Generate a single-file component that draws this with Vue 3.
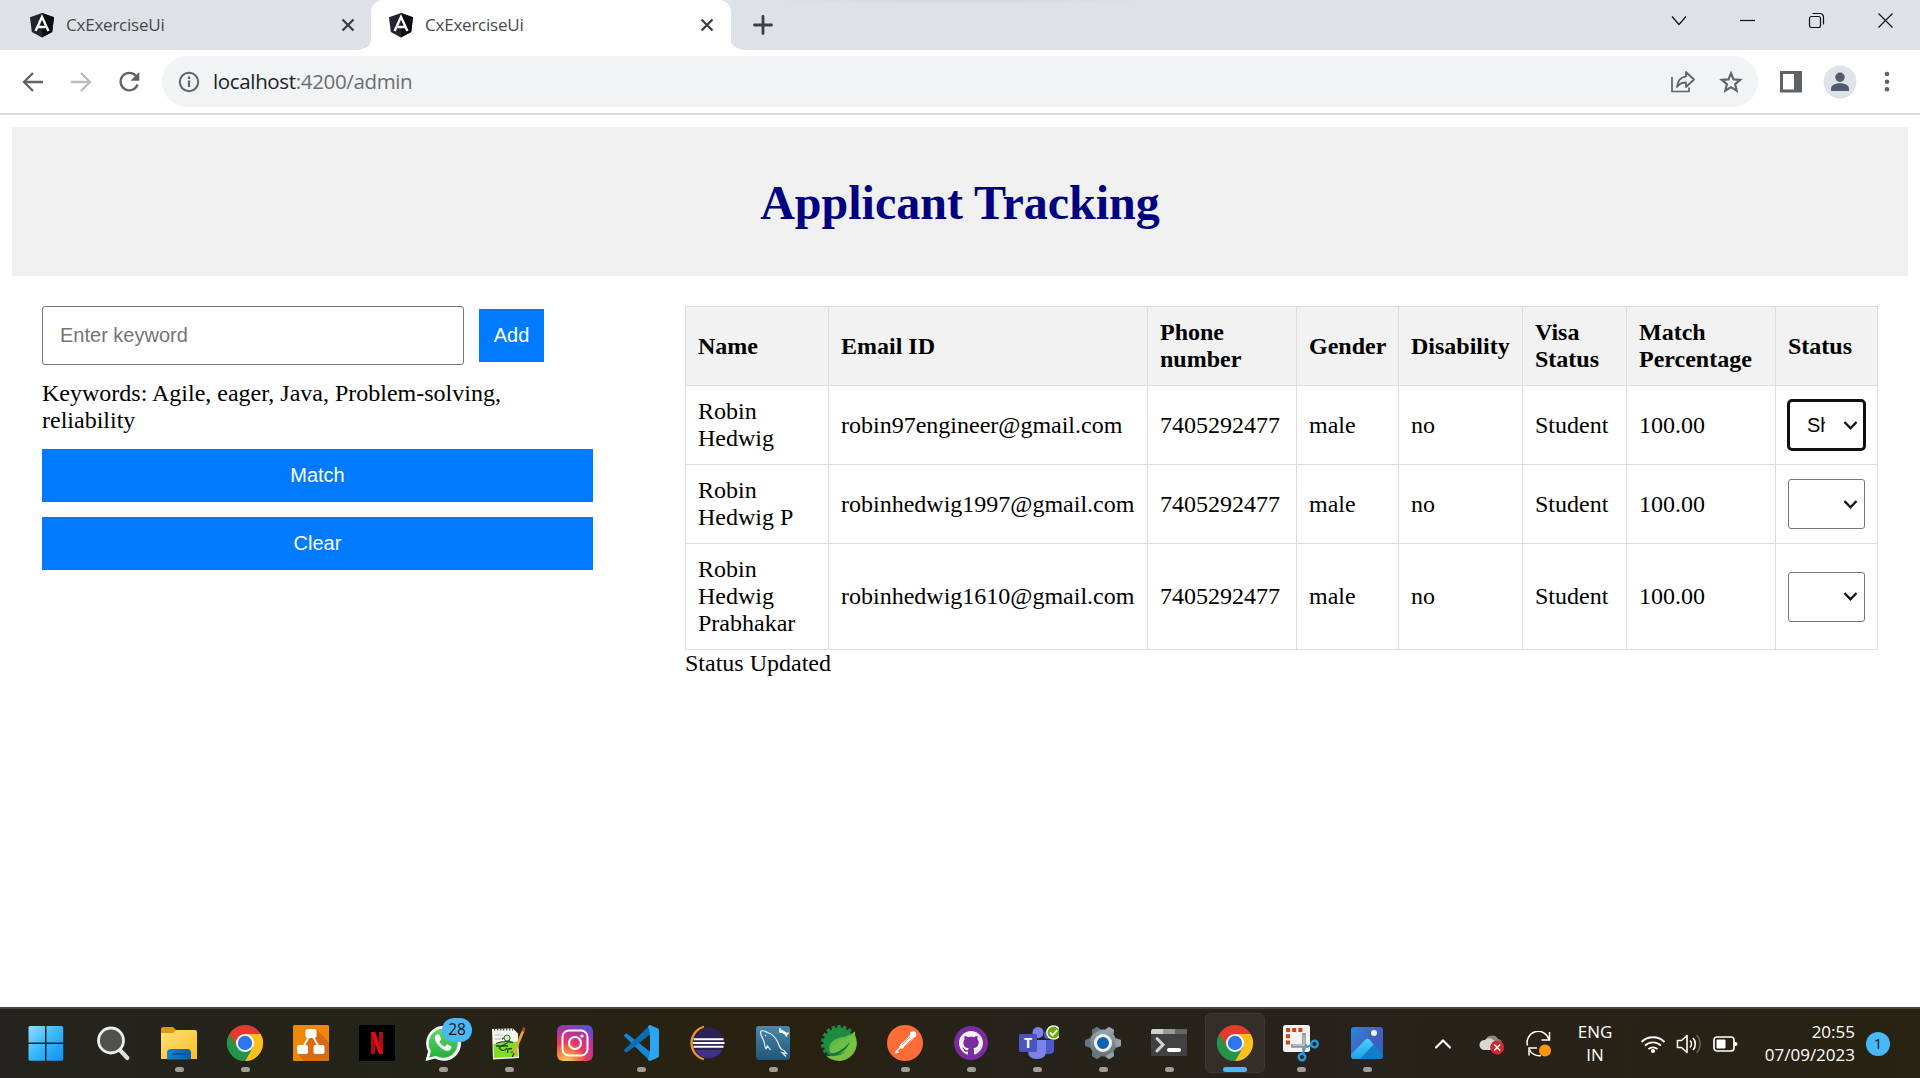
<script setup>
import { ref } from 'vue'

const keyword = ref('')
const tabs = [
  { title: 'CxExerciseUi', active: false },
  { title: 'CxExerciseUi', active: true }
]
const columns = [
  { label: 'Name', width: 143 },
  { label: 'Email ID', width: 319 },
  { label: 'Phone number', width: 149 },
  { label: 'Gender', width: 102 },
  { label: 'Disability', width: 124 },
  { label: 'Visa Status', width: 104 },
  { label: 'Match Percentage', width: 149 },
  { label: 'Status', width: 102 }
]
const applicants = [
  { name: 'Robin Hedwig', email: 'robin97engineer@gmail.com', status: 'Shortlisted' },
  { name: 'Robin Hedwig P', email: 'robinhedwig1997@gmail.com', status: '' },
  { name: 'Robin Hedwig Prabhakar', email: 'robinhedwig1610@gmail.com', status: '' }
]
const apps = [
  { id: 'start' },
  { id: 'search' },
  { id: 'explorer', running: true },
  { id: 'chrome', running: true },
  { id: 'drawio' },
  { id: 'netflix' },
  { id: 'whatsapp', running: true, badge: '28' },
  { id: 'notepad', running: true },
  { id: 'instagram' },
  { id: 'vscode', running: true },
  { id: 'eclipse' },
  { id: 'mysql', running: true },
  { id: 'spring' },
  { id: 'postman', running: true },
  { id: 'github', running: true },
  { id: 'teams', running: true },
  { id: 'settings', running: true },
  { id: 'terminal', running: true },
  { id: 'chrome', running: true, active: true },
  { id: 'snip', running: true },
  { id: 'photos', running: true }
]
const teeth = [-120, -100, -80, -60, -40, -20, 0, 20, 40]
</script>

<template>
  <div class="screen">
    <div class="tabstrip">
      <div v-for="(tab, i) in tabs" :key="i" class="tab" :class="{ active: tab.active }">
        <svg class="favicon" width="26" height="26" viewBox="0 0 26 26">
          <path d="M13 1L25 5.2 23.2 20 13 25.4 2.8 20 1 5.2z" fill="#22242e" />
          <path d="M13 1L25 5.2 23.2 20 13 25.4z" fill="#0c0d14" />
          <path d="M6.6 19L13 4.8 19.4 19M9.6 15h6.8" fill="none" stroke="#fff" stroke-width="2.4" />
        </svg>
        <span class="tab-title">{{ tab.title }}</span>
        <svg class="tab-close" width="14" height="14" viewBox="0 0 14 14">
          <path d="M1.5 1.5l11 11M12.5 1.5l-11 11" stroke="#3c4043" stroke-width="2.3" />
        </svg>
      </div>
      <svg class="new-tab" width="20" height="20" viewBox="0 0 20 20">
        <path d="M10 1.500v17M1.500 10h17" stroke="#3c4043" stroke-width="2.800" stroke-linecap="round" />
      </svg>
      <div class="window-controls">
        <svg width="17" height="17" viewBox="0 0 17 17"><path d="M2 4.500l7 8 7-8" /></svg>
        <svg width="17" height="17" viewBox="0 0 17 17"><path d="M1 8.5h15" /></svg>
        <svg width="17" height="17" viewBox="0 0 17 17">
          <rect x="1.5" y="4.5" width="11" height="11" rx="2" />
          <path d="M4.5 1.500h7.500a3.500 3.500 0 0 1 3.500 3.500v7.500" />
        </svg>
        <svg width="17" height="17" viewBox="0 0 17 17"><path d="M1.500 1.500l14 14M15.500 1.500l-14 14" /></svg>
      </div>
    </div>

    <div class="toolbar">
      <div class="nav-buttons">
        <svg width="24" height="24" viewBox="0 0 24 24"><path d="M22 12H4M12 3l-9 9 9 9" stroke="#5f6368" /></svg>
        <svg width="24" height="24" viewBox="0 0 24 24"><path d="M2 12h18M12 3l9 9-9 9" stroke="#babcbe" /></svg>
        <svg width="24" height="24" viewBox="0 0 24 24">
          <path d="M20.500 14.500A8.700 8.700 0 1 1 18.800 5.800" stroke="#5f6368" />
          <path class="arrowhead" d="M22.300 2v8.700h-8.700z" />
        </svg>
      </div>
      <div class="omnibox">
        <svg class="info" width="24" height="24" viewBox="0 0 24 24">
          <circle cx="12" cy="12" r="9.200" fill="none" stroke="#5f6368" stroke-width="2" />
          <path d="M12 10.500v6.500M12 6.600v2.400" stroke="#5f6368" stroke-width="2.200" />
        </svg>
        <span class="url"><span class="host">localhost</span>:4200/admin</span>
        <svg class="share" width="26" height="24" viewBox="0 0 26 24">
          <path d="M2 7v14.500h17v-4" fill="none" stroke="#5f6368" stroke-width="1.700" />
          <path d="M16 2l8 7.500-8 7.500V12.500c-4 0-7 1.500-9 4.500.500-6 4-10 9-10.700z" fill="none" stroke="#5f6368" stroke-width="1.800" stroke-linejoin="round" />
        </svg>
        <svg class="star" width="24" height="24" viewBox="0 0 24 24">
          <path d="M12 3.200l2.500 6.200 6.700.500-5.100 4.300 1.600 6.500L12 17.200l-5.700 3.500 1.600-6.500-5.100-4.300 6.700-.500z" fill="none" stroke="#5f6368" stroke-width="2.100" />
        </svg>
      </div>
      <svg class="panel" width="22" height="22" viewBox="0 0 22 22">
        <path d="M0 0h22v21.500H0zM3 3v15.500h11V3z" fill="#5f6368" fill-rule="evenodd" />
      </svg>
      <svg class="avatar" width="34" height="34" viewBox="0 0 34 34">
        <circle cx="17" cy="17" r="16.500" fill="#dfe2e9" />
        <circle cx="17" cy="12.200" r="4.700" fill="#505b6e" />
        <path d="M8 26v-2.500c0-3.500 5-5.300 9-5.300s9 1.800 9 5.300V26z" fill="#505b6e" />
      </svg>
      <svg class="menu" width="6" height="22" viewBox="0 0 6 22" fill="#5f6368">
        <circle cx="3" cy="3" r="2.300" /><circle cx="3" cy="10.700" r="2.300" /><circle cx="3" cy="18.300" r="2.300" />
      </svg>
    </div>

    <main class="page">
      <header class="banner"><h1>Applicant Tracking</h1></header>
      <div class="content">
        <section class="filters">
          <div class="keyword-row">
            <input v-model="keyword" type="text" placeholder="Enter keyword">
            <button class="add">Add</button>
          </div>
          <p class="keywords">Keywords: Agile, eager, Java, Problem-solving, reliability</p>
          <button class="wide">Match</button>
          <button class="wide">Clear</button>
        </section>
        <section class="results">
          <table>
            <colgroup><col v-for="c in columns" :key="c.label" :style="{ width: c.width + 'px' }"></colgroup>
            <thead>
              <tr><th v-for="c in columns" :key="c.label">{{ c.label }}</th></tr>
            </thead>
            <tbody>
              <tr v-for="a in applicants" :key="a.email">
                <td>{{ a.name }}</td>
                <td>{{ a.email }}</td>
                <td>7405292477</td>
                <td>male</td>
                <td>no</td>
                <td>Student</td>
                <td>100.00</td>
                <td>
                  <div class="select" :class="{ focused: a.status }">
                    <span class="select-value">{{ a.status.slice(0, 2) }}</span>
                    <svg width="15" height="11" viewBox="0 0 15 11"><path d="M1.500 2l6 6.300 6-6.300" fill="none" stroke="#111" stroke-width="2.300" /></svg>
                  </div>
                </td>
              </tr>
            </tbody>
          </table>
          <p class="message">Status Updated</p>
        </section>
      </div>
    </main>

    <footer class="taskbar">
      <svg class="defs" width="0" height="0">
        <defs>
          <linearGradient id="win" x1="0" y1="0" x2="1" y2="1"><stop offset="0" stop-color="#8ae0ff" /><stop offset=".5" stop-color="#35b7fa" /><stop offset="1" stop-color="#0c8ff5" /></linearGradient>
          <linearGradient id="folder" x1="0" y1="0" x2="1" y2="1"><stop offset="0" stop-color="#ffe07a" /><stop offset="1" stop-color="#fbbf24" /></linearGradient>
          <linearGradient id="pocket" x1="0" y1="0" x2="1" y2="0"><stop offset="0" stop-color="#1583d6" /><stop offset="1" stop-color="#0a5ba5" /></linearGradient>
          <linearGradient id="whats" x1="0" y1="0" x2="0" y2="1"><stop offset="0" stop-color="#62d66e" /><stop offset="1" stop-color="#24b13c" /></linearGradient>
          <radialGradient id="insta" cx=".25" cy="1.050" r="1.150"><stop offset="0" stop-color="#ffd867" /><stop offset=".25" stop-color="#fb8b3c" /><stop offset=".5" stop-color="#e93a5e" /><stop offset=".75" stop-color="#c02f9c" /><stop offset="1" stop-color="#5a4fd0" /></radialGradient>
          <linearGradient id="mysql" x1="0" y1="0" x2="0" y2="1"><stop offset="0" stop-color="#4d87ac" /><stop offset="1" stop-color="#1f5579" /></linearGradient>
          <linearGradient id="leaf" x1="0" y1="0" x2="1" y2="1"><stop offset="0" stop-color="#4fae45" /><stop offset="1" stop-color="#86cb45" /></linearGradient>
          <linearGradient id="gear" x1="0" y1="0" x2="0" y2="1"><stop offset="0" stop-color="#9aa4ab" /><stop offset="1" stop-color="#64717a" /></linearGradient>
          <linearGradient id="photo" x1="0" y1="0" x2="1" y2="1"><stop offset="0" stop-color="#1f8be0" /><stop offset=".55" stop-color="#4a5cb9" /><stop offset="1" stop-color="#0e6fd0" /></linearGradient>
          <linearGradient id="hill" x1="0" y1="0" x2="0" y2="1"><stop offset="0" stop-color="#4cd2fb" /><stop offset="1" stop-color="#1f9eea" /></linearGradient>
        </defs>
      </svg>
      <div class="apps">
        <div v-for="(app, i) in apps" :key="i" class="app" :class="[app.id, { active: app.active, running: app.running }]">
          <svg width="44" height="44" viewBox="-4 -4 44 44">
            <g v-if="app.id === 'start'">
              <path d="M.500 2.500a1.500 1.500 0 0 1 1.500-1.500h15v16.500H.500zM18.500 1h15.200a1.500 1.500 0 0 1 1.500 1.500v15H18.500zM.500 19h16.500v16.700H2a1.500 1.500 0 0 1-1.500-1.500zM18.500 19h16.700v15.200a1.500 1.500 0 0 1-1.500 1.500H18.500z" fill="url(#win)" />
            </g>
            <g v-else-if="app.id === 'search'">
              <path d="M24 24l8.300 9" stroke="#dedede" stroke-width="4.200" stroke-linecap="round" />
              <circle cx="16" cy="15.500" r="12.500" fill="#50504d" stroke="#ececec" stroke-width="2.800" />
            </g>
            <g v-else-if="app.id === 'explorer'">
              <path d="M0 8V4q0-2 2-2h10l4 4v5H0z" fill="#d99b0b" />
              <path d="M0 8h12l3-3h19q2 0 2 2v27H0z" fill="url(#folder)" />
              <path d="M6 34.500V28q0-4 4-4h16q4 0 4 4v6.500z" fill="url(#pocket)" />
              <path d="M11 29h14" stroke="#0a4d8c" stroke-width="1.600" />
            </g>
            <g v-else-if="app.id === 'chrome'">
              <circle cx="18" cy="18" r="18" fill="#e33b2e" />
              <path d="M18 9h15.590A18 18 0 0 1 18 36l7.800-13.500z" fill="#fcc21b" />
              <path d="M2.410 9L10.200 22.500l8 4.500 7.600-4.500L18 36A18 18 0 0 1 2.410 9z" fill="#21954a" />
              <circle cx="18" cy="18" r="9" fill="#fff" /><circle cx="18" cy="18" r="7.200" fill="#2b78ee" />
            </g>
            <g v-else-if="app.id === 'drawio'">
              <rect width="36" height="36" rx="1.500" fill="#f08705" />
              <path d="M23 4l13 13v19H11l-6-7 9-14z" fill="#d96c13" />
              <path d="M17 10L9 24M19 10l8 14" stroke="#fff" stroke-width="1.800" />
              <rect x="12.500" y="4" width="11" height="9" rx="2" fill="#fff" /><rect x="4" y="20" width="11" height="9" rx="2" fill="#fff" /><rect x="20.500" y="20" width="11" height="9" rx="2" fill="#fff" />
            </g>
            <g v-else-if="app.id === 'netflix'">
              <rect width="36" height="36" fill="#000" />
              <rect x="12" y="7" width="4" height="22" fill="#a90d16" /><rect x="20" y="7" width="4" height="22" fill="#a90d16" />
              <rect x="7.800" y="7" width="4.200" height="22" fill="#e50914" transform="translate(1.640 0) skewX(20)" />
            </g>
            <g v-else-if="app.id === 'whatsapp'">
              <path d="M.500 36l2.600-9.500A17.500 17.500 0 1 1 10 33.600z" fill="#fff" />
              <path d="M4.200 32.500l1.700-6.500A14.500 14.500 0 1 1 11 30.900z" fill="url(#whats)" />
              <path d="M12 9.500c-3 1.500-3 5 0 9s7 7 10 7.300 4.500-2 4.500-4.300l-4.500-2.300-2.200 2.500c-2.500-1-4.500-3-5.500-5.400l2-2-2-4.800z" fill="#fff" />
            </g>
            <g v-else-if="app.id === 'notepad'">
              <path d="M1 4l21-.500 5 5L28 33 2 34.500z" fill="#f6f6f2" />
              <path d="M2.500 19L26 16.500 27 31.500 3 33z" fill="#7fdc2a" />
              <path d="M3 4.500h19" stroke="#444" stroke-width="2.200" stroke-dasharray="1.300 1.700" />
              <path d="M4 10h8M4 14h6" stroke="#a8b7cc" />
              <path d="M5 18.500q8-3 17-1M5 21h12M11 14c5-4 10 1 5 4s-9 4-7 6 5 2 7-1M16.500 28l.5-4 4-.500M20 27.500l5-1.500" fill="none" stroke="#1c4a1d" stroke-width="1.300" />
              <circle cx="16" cy="13" r="3" fill="#d7f0bf" stroke="#287b23" />
              <path d="M22.500 29L32.500 5" stroke="#e9a829" stroke-width="2.800" /><path d="M31.700 6.500l1.800-4" stroke="#bb3b36" stroke-width="2.600" /><path d="M22.800 28l-1.300 4" stroke="#333" stroke-width="1.200" />
            </g>
            <g v-else-if="app.id === 'instagram'">
              <rect width="36" height="36" rx="6" fill="url(#insta)" />
              <rect x="5.500" y="5.500" width="25" height="25" rx="6.500" fill="none" stroke="#fff" stroke-width="2" />
              <circle cx="18" cy="18" r="6" fill="none" stroke="#fff" stroke-width="2.200" /><circle cx="25" cy="11" r="1.600" fill="#fff" />
            </g>
            <g v-else-if="app.id === 'vscode'">
              <path d="M1 10.500l2.500-1.700L27 27v8.500z" fill="#1287d2" stroke="#1287d2" stroke-linejoin="round" />
              <path d="M1 25.500l2.500 1.700L27 9V.500z" fill="#0a6db5" stroke="#0a6db5" stroke-linejoin="round" />
              <path d="M27 0l8 3.500q1 .500 1 2v25q0 1.500-1 2L27 36l-2-1 2-7V8.500L25 1z" fill="#2ba4f2" />
              <path d="M26.500 10v16L16.500 18z" fill="#262218" />
            </g>
            <g v-else-if="app.id === 'eclipse'">
              <path d="M15 1.500a17 17 0 0 0 0 33A18 18 0 0 1 15 1.500z" fill="#f7941e" stroke="#f7941e" stroke-width="1.500" />
              <circle cx="19.500" cy="18" r="15.800" fill="#2d2055" /><path d="M6 25a15.500 15.500 0 0 0 27 0z" fill="#41308a" />
              <path d="M4.500 14.200h30M4 18h31.500M4.500 21.800h30" stroke="#fff" stroke-width="2" />
            </g>
            <g v-else-if="app.id === 'mysql'">
              <rect x="1" y="1" width="34" height="34" rx="3" fill="url(#mysql)" />
              <path d="M11 24c-2-4-1-6-3-10C6 11 5 7 6 6c3-1 5 1 6.500 1.500 5 1 8 5 10.500 10 1 3 2 6 4 7 2.500 1 3 2 4.500 4l-4.500-1 4 4M11 24l1.500-3 3 4" fill="none" stroke="#e4eff6" stroke-width="1.200" />
              <circle cx="10.500" cy="10.500" r=".7" fill="#fff" />
              <path d="M26 5.500l6.500 4.500" stroke="#fff" stroke-width="2.600" /><path d="M25 3v4h3M34 8l-3 .500.500 3" fill="none" stroke="#fff" stroke-width="1.500" />
            </g>
            <g v-else-if="app.id === 'spring'">
              <g fill="#1f8a42"><rect v-for="t in teeth" :key="t" x="16.300" y="0" width="3.400" height="5" :transform="`rotate(${t} 18 18)`" /></g>
              <circle cx="18" cy="18" r="15.500" fill="#1f8a42" />
              <path d="M33.500 9a18 18 0 0 1-28.500 21.500c8 1.500 15 .500 20-4 5-4.500 7-10.500 8.500-17.500z" fill="#79c143" />
              <path d="M34 6c-5 6.500-13 5-20 8.500-6 3.500-7 9-4.500 13.500 8 1.500 17 0 21.500-7 3-5 3.500-10 3-15z" fill="url(#leaf)" />
              <path d="M4.500 29.500c3-.500 5.500-.500 9-1.500 6-2 11-6 15.500-11-3 7-8 11-15 13-4 .9-7 .5-9.500-.500z" fill="#17743b" />
            </g>
            <g v-else-if="app.id === 'postman'">
              <circle cx="18" cy="18" r="18" fill="#ff6c37" />
              <path d="M12 22L23 10l3.500 3.500L15 24z" fill="#fff" /><circle cx="26.200" cy="9.500" r="3.200" fill="#fff" />
              <path d="M14 22l-5.500 5M8 28l4-1.200M13 20l10-6" stroke="#fff" stroke-width="1.300" /><path d="M15 20l8-8M17 22l8-8" stroke="#ff6c37" stroke-width=".7" />
            </g>
            <g v-else-if="app.id === 'github'">
              <circle cx="18" cy="18" r="17" fill="#7b2da0" />
              <path transform="translate(6 6) scale(1.500)" fill="#f7f1fa" d="M8 0C3.580 0 0 3.580 0 8c0 3.540 2.290 6.530 5.470 7.590.4.070.55-.17.55-.38 0-.19-.01-.82-.01-1.490-2.010.37-2.530-.49-2.690-.94-.09-.23-.48-.94-.82-1.130-.28-.15-.68-.52-.01-.53.63-.01 1.080.58 1.230.82.72 1.210 1.870.87 2.330.66.07-.52.28-.87.51-1.070-1.780-.2-3.640-.89-3.640-3.950 0-.87.31-1.590.82-2.150-.08-.2-.36-1.020.08-2.120 0 0 .67-.21 2.200.82.64-.18 1.320-.27 2-.27s1.360.09 2 .27c1.530-1.040 2.200-.82 2.200-.82.44 1.100.16 1.920.08 2.120.51.56.82 1.270.82 2.150 0 3.070-1.870 3.750-3.650 3.950.29.25.54.73.54 1.480 0 1.070-.01 1.930-.01 2.200 0 .21.15.46.55.38A8.010 8.010 0 0 0 16 8c0-4.420-3.580-8-8-8z" />
            </g>
            <g v-else-if="app.id === 'teams'">
              <circle cx="29" cy="10" r="4" fill="#5059c9" /><path d="M24 15h11v10q0 4-6 4h-5z" fill="#5059c9" />
              <circle cx="19" cy="7.500" r="5.500" fill="#7b83eb" /><path d="M9 15h18v11q0 8-9 8t-9-8z" fill="#7b83eb" />
              <rect x="0" y="9" width="18" height="18" rx="1.500" fill="#4b53bc" />
              <text x="9" y="23" text-anchor="middle" font-family="'Open Sans', sans-serif" font-size="14" font-weight="700" fill="#fff">T</text>
              <circle cx="34.500" cy="7.500" r="7.300" fill="#fff" /><circle cx="34.500" cy="7.500" r="6" fill="#6fac0b" /><path d="M31 7.500l2.700 2.700 4.500-5" fill="none" stroke="#fff" stroke-width="1.800" />
            </g>
            <g v-else-if="app.id === 'settings'">
              <g fill="url(#gear)"><circle cx="18" cy="18" r="13.500" /><path d="M13 5.500L15 1h6l2 4.500zM13 30.500L15 35h6l2-4.500z" transform="rotate(30 18 18)" /><path d="M13 5.500L15 0h6l2 5.500zM13 30.500L15 36h6l2-5.500z" transform="rotate(90 18 18)" /><path d="M13 5.500L15 1h6l2 4.500zM13 30.500L15 35h6l2-4.500z" transform="rotate(150 18 18)" /></g>
              <circle cx="18" cy="18" r="7.500" fill="#0e61b4" stroke="#f3f5f7" stroke-width="3" />
            </g>
            <g v-else-if="app.id === 'terminal'">
              <rect y="4" width="36" height="27" rx="1.500" fill="#414141" /><path d="M1.500 4H12v5H0V5.500z" fill="#d0d0d0" /><path d="M12 4h12v5H12z" fill="#999" /><path d="M24 4h12v5H24z" fill="#666" />
              <path d="M6 13.500l6 6.200-6 6.200" fill="none" stroke="#d1d1d1" stroke-width="3" stroke-linecap="round" /><path d="M18 25h10" stroke="#fff" stroke-width="4" stroke-linecap="round" />
            </g>
            <g v-else-if="app.id === 'snip'">
              <rect x="0" y="0" width="27" height="27" rx="2.500" fill="#f3f3f3" />
              <path d="M3 5h16.500M5 9.200v10.500" stroke="#d34310" stroke-width="4" stroke-dasharray="4 2.200" />
              <path d="M8 21h16M21 8v17" stroke="#8e949b" stroke-width="3.600" /><path d="M10 20h11V10" fill="none" stroke="#c2c6ca" stroke-width="1.400" />
              <circle cx="31.500" cy="19" r="3.300" fill="none" stroke="#2398e2" stroke-width="2.400" /><circle cx="19" cy="32" r="3.300" fill="none" stroke="#2398e2" stroke-width="2.400" /><path d="M28.500 20.500L23 22M21 24l-1 5" fill="none" stroke="#2398e2" stroke-width="2.200" />
            </g>
            <g v-else>
              <rect x="2" y="2" width="32" height="32" rx="3" fill="url(#photo)" />
              <path d="M2.500 31L16 15q2.500-3 5 0L33.500 30v1q0 3-3 3H5q-2.500 0-2.500-3z" fill="#137dc9" />
              <path d="M2 29.500L16 15q2.500-3 5 0l3.500 4.500L11 34H5q-3 0-3-3z" fill="url(#hill)" /><circle cx="25" cy="8" r="3" fill="#effaff" />
            </g>
          </svg>
          <span v-if="app.badge" class="badge">{{ app.badge }}</span>
        </div>
      </div>
      <div class="tray">
        <svg class="up" width="18" height="12" viewBox="0 0 18 12"><path d="M2 9.500l7-7 7 7" fill="none" stroke="#fff" stroke-width="2.200" stroke-linecap="round" /></svg>
        <svg class="cloud" width="26" height="22" viewBox="0 0 26 22">
          <path d="M6 9a7 7 0 0 1 13-3 6 6 0 0 1 3 10H7z" fill="#8b8b88" /><path d="M5 17a5 5 0 0 1 1-10 6 6 0 0 1 10 3l-3 7z" fill="#d6d6d4" />
          <circle cx="18.200" cy="14.500" r="7" fill="#d1272f" /><path d="M15.200 11.500l6 6M21.200 11.500l-6 6" stroke="#fff" stroke-width="1.500" />
        </svg>
        <svg class="sync" width="26" height="26" viewBox="0 0 26 26">
          <path d="M1.500 14.500A10.500 10.500 0 0 1 23 8.500M23.500 1v8h-8M3 24.500v-7.500h8M3 18a11 11 0 0 0 12 6.500" fill="none" stroke="#fff" stroke-width="1.500" /><circle cx="19" cy="19.500" r="6" fill="#ff9800" />
        </svg>
        <div class="lang"><span>ENG</span><span>IN</span></div>
        <svg class="wifi" width="26" height="20" viewBox="0 0 26 20">
          <g fill="none" stroke="#fff" stroke-width="1.800"><path d="M1.500 8a16.300 16.300 0 0 1 23 0M5 11.700a11.300 11.300 0 0 1 16 0M8.400 15.200a6.500 6.500 0 0 1 9.200 0" /></g><circle cx="13" cy="17" r="2.100" fill="#fff" />
        </svg>
        <svg class="volume" width="26" height="22" viewBox="0 0 26 22">
          <path d="M1.500 7.500h4L11 2.500v17l-5.500-5h-4z" fill="none" stroke="#fff" stroke-width="1.600" stroke-linejoin="round" /><path d="M14 7.500a5 5 0 0 1 0 7M17 5a9 9 0 0 1 0 12" fill="none" stroke="#fff" stroke-width="1.600" /><path d="M20.500 2a13 13 0 0 1 0 18" fill="none" stroke="#65605a" stroke-width="1.600" />
        </svg>
        <svg class="battery" width="26" height="18" viewBox="0 0 26 18">
          <rect x="2" y="2" width="20" height="14" rx="3" fill="none" stroke="#fff" stroke-width="1.700" /><rect x="4.500" y="4.500" width="9" height="9" rx="1" fill="#fff" /><path d="M22.500 7h1q2 0 2 2t-2 2h-1z" fill="#fff" />
        </svg>
        <div class="clock"><span>20:55</span><span>07/09/2023</span></div>
        <span class="notices">1</span>
      </div>
    </footer>
  </div>
</template>

<style>
body { margin: 0; overflow: hidden; }
</style>

<style scoped>
.screen { width: 1920px; height: 1078px; display: flex; flex-direction: column; background: #fff; overflow: hidden; }
.screen svg { flex: none; display: block; }

.tabstrip { height: 50px; flex: none; display: flex; align-items: center; background: radial-gradient(ellipse 200px 5px at 960px 0, #d5d8dd, transparent) #dee1e6; padding-left: 12px; box-sizing: border-box; }
.tab { position: relative; width: 359px; height: 50px; box-sizing: border-box; display: flex; align-items: center; padding: 0 16px 0 17px; font: 17px "Open Sans", "Noto Sans", sans-serif; color: #45494d; }
.tab.active { width: 360px; padding-right: 17px; background: #fff; border-radius: 12px 12px 0 0; }
.tab.active::before, .tab.active::after { content: ""; position: absolute; bottom: 0; width: 10px; height: 12px; }
.tab.active::before { left: -10px; background: radial-gradient(circle at 0 0, transparent 10.500px, #fff 11px); }
.tab.active::after { right: -10px; background: radial-gradient(circle at 100% 0, transparent 10.500px, #fff 11px); }
.tab-title { flex: 1; margin-left: 11px; padding-bottom: 2px; letter-spacing: -0.220px; }
.new-tab { margin-left: 22px; }
.window-controls { margin-left: auto; display: flex; gap: 52px; padding: 0 26px 9px 0; }
.window-controls path, .window-controls rect { fill: none; stroke: #111; stroke-width: 1.200; }

.toolbar { height: 65px; flex: none; box-sizing: border-box; border-bottom: 2px solid #d9dbdc; display: flex; align-items: center; padding: 0 30px 0 21px; }
.nav-buttons { display: flex; gap: 24px; width: 141px; }
.nav-buttons path { fill: none; stroke-width: 2.300; }
.nav-buttons .arrowhead { fill: #5f6368; }
.omnibox { width: 1596px; height: 51px; box-sizing: border-box; border-radius: 26px; background: #f1f3f4; display: flex; align-items: center; padding: 0 15px; }
.url { margin-left: 12px; padding-bottom: 1px; flex: 1; font: 20.500px "Open Sans", "Noto Sans", sans-serif; letter-spacing: -0.350px; color: #6a6e73; }
.host { color: #202124; }
.star { margin-left: 23px; }
.panel { margin-left: 22px; }
.avatar { margin-left: 21px; }
.menu { margin-left: 27px; }

.page { flex: 1; padding: 12px 12px 0; font: 24px/27px "Liberation Serif", "Times New Roman", serif; color: #000; }
.banner { height: 149px; display: flex; align-items: center; justify-content: center; background: #f0f0f0; }
h1 { margin: 2px 0 0; font-size: 48px; line-height: 54px; color: #000080; }
.content { display: flex; justify-content: space-between; align-items: flex-start; padding: 30px 30px 0; }
.filters { width: 551px; }
.keyword-row { display: flex; align-items: center; gap: 15px; }
input { width: 422px; height: 59px; box-sizing: border-box; border: 1px solid #767676; border-radius: 3px; padding: 0 17px; font: 20px "Liberation Sans", Arial, sans-serif; color: #000; }
input::placeholder { color: #757575; }
button { border: 0; background: #007bff; color: #fff; font: 20px "Liberation Sans", Arial, sans-serif; height: 53px; padding: 0; display: block; }
.add { width: 65px; }
.wide { width: 551px; margin-bottom: 15px; }
.keywords { margin: 15px 0; width: 500px; }
.results { width: 1193px; }
table { width: 1193px; border-collapse: collapse; table-layout: fixed; }
th, td { border: 1px solid #ddd; padding: 12px; text-align: left; vertical-align: middle; }
th { background: #f2f2f2; }
.message { margin: 0; }
.select { width: 77px; height: 50px; margin: 2px 0; box-sizing: border-box; border: 1px solid #767676; border-radius: 3px; display: flex; align-items: center; justify-content: space-between; padding: 0 6px 0 18px; font: 20px "Liberation Sans", Arial, sans-serif; }
.select.focused { outline: 3px solid #101010; outline-offset: -2.500px; border-radius: 4px; }
.select-value { width: 18px; overflow: hidden; white-space: nowrap; }

.taskbar { height: 71px; flex: none; box-sizing: border-box; border-top: 2px solid #474642; display: flex; align-items: center; background: linear-gradient(90deg, #24231d, #25241a 20%, #29210f 41%, #25231b 52%, #27221b 70%, #292313); color: #fff; font-family: "Open Sans", "Noto Sans", sans-serif; }
.defs { position: absolute; }
.apps { display: flex; padding-left: 12px; }
.app { position: relative; width: 66px; height: 69px; display: flex; align-items: center; justify-content: center; padding-bottom: 1px; box-sizing: border-box; }
.app.start, .app.search { width: 67px; }
.app.running::after { content: ""; position: absolute; left: 50%; bottom: 6px; width: 9px; height: 5px; margin-left: -4.500px; border-radius: 3px; background: #a09c96; }
.app.active::before { content: ""; position: absolute; inset: 4px 3px 5px; box-sizing: border-box; border: 1px solid #3e3a33; border-radius: 6px; background: #332f28; }
.app.active::after { width: 24px; margin-left: -12px; background: #4cb9f7; }
.app svg { position: relative; }
.badge { position: absolute; left: 32px; top: 9px; width: 30px; height: 24px; border-radius: 12px; background: #48b9f8; color: #101010; font-size: 15.500px; line-height: 23px; text-align: center; }
.tray { margin-left: auto; display: flex; align-items: center; padding-right: 30px; }
.cloud { margin-left: 27px; }
.sync { margin-left: 21px; }
.lang, .clock { display: flex; flex-direction: column; font-size: 17px; line-height: 23px; padding-bottom: 2px; }
.lang { margin-left: 21px; width: 44px; align-items: center; }
.wifi { margin-left: 23px; }
.volume { margin-left: 10px; }
.battery { margin-left: 10px; }
.clock { margin-left: 15px; width: 102px; align-items: flex-end; }
.notices { margin-left: 11px; width: 24px; height: 24px; border-radius: 50%; background: #48b9f8; color: #111; font-size: 15px; line-height: 23px; text-align: center; }
</style>
